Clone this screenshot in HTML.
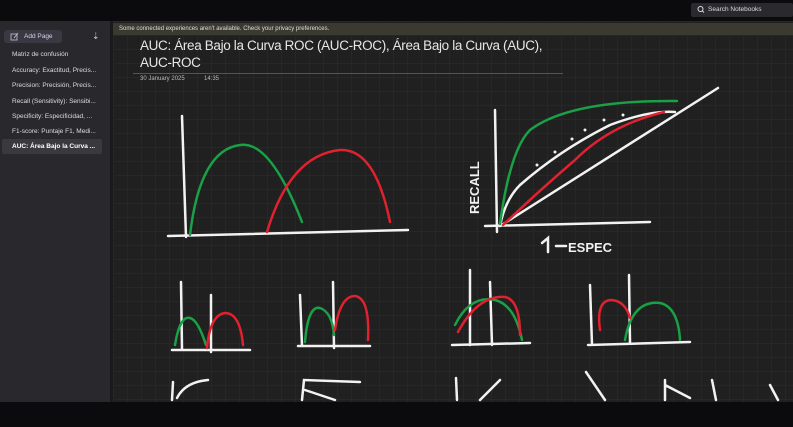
<!DOCTYPE html>
<html><head><meta charset="utf-8"><style>
body{margin:0;width:793px;height:427px;overflow:hidden;background:#0b0b0d;font-family:"Liberation Sans",sans-serif;position:relative}
.top{position:absolute;left:0;top:0;width:793px;height:21px;background:#0b0b0e}
.search{position:absolute;left:691px;top:3px;width:102px;height:14px;background:#2a2a2e;border-radius:2px;color:#ddd;font-size:6.5px;line-height:14px}
.side{position:absolute;left:0;top:21px;width:110px;height:381px;background:#29282c}
.sep{position:absolute;left:110px;top:21px;width:3px;height:381px;background:#1a1a1c}
.main{position:absolute;left:113px;top:21px;width:680px;height:381px;background:#1f201f;background-image:linear-gradient(#262726 1px,transparent 1px),linear-gradient(90deg,#262726 1px,transparent 1px);background-size:14px 14px}
.bar{position:absolute;left:113px;top:23px;width:680px;height:12px;background:#3b3a30;color:#ddd;font-size:6px;line-height:12px;padding-left:6px;box-sizing:border-box}
.bottom{position:absolute;left:0;top:402px;width:793px;height:25px;background:#0b0b0d}
.add{position:absolute;left:4px;top:30px;width:58px;height:13px;background:#3a3840;border-radius:3px;color:#d8d0f0;font-size:6.5px;line-height:13px;padding-left:20px;box-sizing:border-box}
.item{position:absolute;left:12px;font-size:6.5px;color:#ddd;white-space:nowrap}
.sel{position:absolute;left:2px;top:139px;width:100px;height:15px;background:#3a393d;border-radius:2px}
h1{position:absolute;left:140px;top:37px;margin:0;font-weight:normal;font-size:13.5px;letter-spacing:-0.35px;line-height:17px;color:#e6e6e6;width:420px;white-space:nowrap}
.line{position:absolute;left:133px;top:73px;width:430px;height:1px;background:#555}
.date{position:absolute;top:76px;font-size:6px;color:#bbb}
</style></head><body>
<div class="top"></div>
<div class="search"><svg width="10" height="14" style="position:absolute;left:5px;top:0"><circle cx="4.5" cy="6" r="2.5" fill="none" stroke="#ddd" stroke-width="1"/><line x1="6.3" y1="7.8" x2="8" y2="9.5" stroke="#ddd"/></svg><span style="position:absolute;left:17px">Search Notebooks</span></div>
<div class="side"></div><div class="sep"></div>
<div class="main"></div>
<div class="bar">Some connected experiences aren't available. Check your privacy preferences.</div>
<div class="add"><svg width="10" height="10" style="position:absolute;left:6px;top:2px"><rect x="1" y="2" width="6" height="6" fill="none" stroke="#c8c0e0" stroke-width="0.8"/><line x1="4" y1="6" x2="8" y2="1" stroke="#c8c0e0" stroke-width="0.8"/></svg>Add Page</div>
<div style="position:absolute;left:92px;top:31px;color:#ccc;font-size:9px">⇣</div>
<div class="sel"></div>
<div class="item" style="top:51px">Matriz de confusión</div>
<div class="item" style="top:67px">Accuracy: Exactitud, Precis...</div>
<div class="item" style="top:82px">Precision: Precisión, Precis...</div>
<div class="item" style="top:98px">Recall (Sensitivity): Sensibi...</div>
<div class="item" style="top:113px">Specificity: Especificidad, ...</div>
<div class="item" style="top:128px">F1-score: Puntaje F1, Medi...</div>
<div class="item" style="top:143px;font-weight:bold;color:#fff">AUC: Área Bajo la Curva ...</div>
<h1>AUC: Área Bajo la Curva ROC (AUC-ROC), Área Bajo la Curva (AUC),<br>AUC-ROC</h1>
<div class="line"></div>
<div class="date" style="left:140px">30 January 2025</div>
<div class="date" style="left:204px">14:35</div>
<svg width="793" height="427" style="position:absolute;left:0;top:0" fill="none" stroke-linecap="round" stroke-width="2.5">
<g stroke="#f2f2f2">
<path d="M182 116 L186 237"/><path d="M168 236 L408 230"/>
<path d="M495 110 L497 232"/><path d="M485 226 L650 222"/>
<path d="M500 226 Q620 150 718 88"/>
<path d="M500 226 Q505 200 520 185 Q560 150 610 125 Q650 110 675 112"/>
<path d="M542 243 L548 238 L548 252 M556 246 L566 246"/>
<path d="M181 282 L182 350 M172 350 L250 350 M211 295 L211 352"/>
<path d="M300 295 L302 346 M298 346 L370 346 M333 282 L334 348"/>
<path d="M470 270 L470 345 M452 345 L530 343 M490 282 L492 345"/>
<path d="M590 285 L592 345 M588 345 L690 342 M629 275 L630 343"/>
<path d="M172 400 L173 382 M177 398 Q185 382 208 380 M302 400 L304 380 L360 382 M305 390 L335 400 M456 378 L457 400 M480 400 L500 380 M586 372 L605 400 M665 385 L690 398 M665 380 L665 400 M712 380 L716 400 M770 385 L778 400"/>
</g>
<g fill="#f2f2f2" stroke="none">
<circle cx="537" cy="165" r="1.5"/><circle cx="555" cy="152" r="1.5"/><circle cx="572" cy="139" r="1.5"/><circle cx="585" cy="130" r="1.5"/><circle cx="604" cy="120" r="1.5"/><circle cx="623" cy="115" r="1.5"/>
</g>
<text x="0" y="0" transform="translate(479,214) rotate(-90)" fill="#f2f2f2" font-size="13" font-weight="bold" font-family="Liberation Sans Narrow, Liberation Sans, sans-serif" stroke="none">RECALL</text>
<text x="568" y="252" fill="#f2f2f2" font-size="13" font-weight="bold" stroke="none">ESPEC</text>
<g stroke="#1aa046">
<path d="M190 235 Q200 150 240 145 Q270 140 302 222"/>
<path d="M500 224 Q510 150 530 130 Q570 100 677 101"/>
<path d="M175 345 Q180 315 190 318 Q198 320 206 345"/>
<path d="M305 342 Q308 305 320 308 Q332 312 334 335"/>
<path d="M455 325 Q470 295 495 300 Q515 305 522 340"/>
<path d="M625 340 Q632 300 660 303 Q678 307 680 340"/>
</g>
<g stroke="#e0212f">
<path d="M267 232 Q290 155 340 150 Q375 148 390 222"/>
<path d="M503 225 Q540 190 575 160 Q610 125 664 112"/>
<path d="M207 348 Q210 315 225 313 Q240 313 243 345"/>
<path d="M335 330 Q340 296 355 296 Q370 298 368 340"/>
<path d="M458 332 Q478 295 505 297 Q520 300 520 335"/>
<path d="M600 330 Q596 302 610 300 Q625 300 630 318"/>
</g>
</svg>
<div class="bottom"></div>
</body></html>
